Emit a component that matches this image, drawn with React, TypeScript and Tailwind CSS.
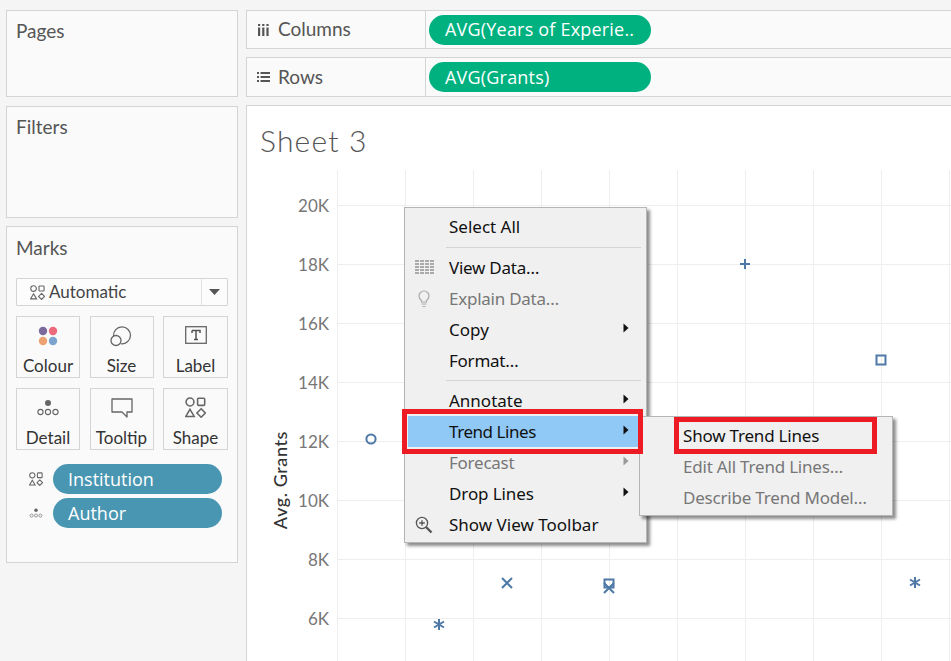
import React from "react";

const ui = { fontFamily: '"Lato","Open Sans",sans-serif' };
const menuFont = { fontFamily: '"Noto Sans","Open Sans",sans-serif' };
const pillFont = { fontFamily: '"Open Sans",Roboto,sans-serif' };

function Shapes({ size = 16, color = "#666" }: { size?: number; color?: string }) {
  return (
    <svg width={size} height={size} viewBox="0 0 16 16" fill="none" stroke={color} strokeWidth="1.2">
      <circle cx="3.8" cy="3.8" r="3" />
      <rect x="9.6" y="1" width="5.4" height="5.4" rx="0.8" />
      <path d="M3.8 9.4 L7 14.8 H0.6 Z" />
      <path d="M12.3 9 L15.5 12.2 L12.3 15.4 L9.1 12.2 Z" />
    </svg>
  );
}

function Dots({ size = 24, color = "#666" }: { size?: number; color?: string }) {
  return (
    <svg width={size} height={size * 0.75} viewBox="0 0 24 18" fill="none" stroke={color} strokeWidth="1.1">
      <circle cx="12" cy="4" r="3" fill={color} stroke="none" />
      <circle cx="4.5" cy="13" r="2.6" />
      <circle cx="12" cy="13" r="2.6" />
      <circle cx="19.5" cy="13" r="2.6" />
    </svg>
  );
}

function MarkCard({ label, w, icon }: { label: string; w: string; icon: React.ReactNode }) {
  return (
    <div className={`${w} h-[62px] border border-[#d4d4d4] bg-[#fafafa] flex flex-col items-center`}>
      <div className="h-[33px] flex items-center justify-center mt-[2px]">{icon}</div>
      <div className="text-[17px] leading-[22px] text-[#333] mt-[3px]">{label}</div>
    </div>
  );
}

function Shelf({ icon, label, pill, mt, h }: { icon: React.ReactNode; label: string; pill: string; mt: string; h: string }) {
  return (
    <div className={`${mt} ${h} border border-[#d4d4d4] border-r-0 bg-[#fafafa] flex items-center`}>
      <div className="w-[179px] h-full border-r border-[#d4d4d4] flex items-center shrink-0">
        <div className="w-[31px] flex justify-center pl-[1px]">{icon}</div>
        <span className="text-[19px] text-[#555]">{label}</span>
      </div>
      <div className="ml-[3px] w-[222px] h-[30px] rounded-full bg-[#00b180] text-white text-[18px] font-medium tracking-[0.2px] pl-[16px] flex items-center" style={pillFont}>
        {pill}
      </div>
    </div>
  );
}

function MenuRow({ label, disabled, arrow, icon, active, track = "tracking-[-0.25px]" }: { label: string; disabled?: boolean; arrow?: boolean; icon?: React.ReactNode; active?: boolean; track?: string }) {
  return (
    <div className={`relative h-[31px] flex items-center ${active ? "bg-[#90c8f6] mx-[3px]" : ""} ${disabled ? "text-[#777]" : "text-[#111]"}`}>
      <div className={`${active ? "w-[35px]" : "w-[38px]"} mr-[6px] flex justify-center shrink-0`}>{icon}</div>
      <span className={`text-[17px] leading-[31px] ${track}`}>{label}</span>
      {arrow && (
        <svg width="6" height="10" viewBox="0 0 6 10" className={`absolute ${active ? "left-[215px]" : "left-[218px]"} top-[9px]`}>
          <path d="M0.5 0.5 L5.5 5 L0.5 9.5 Z" fill={disabled ? "#999" : "#111"} />
        </svg>
      )}
    </div>
  );
}

function Sep({ h }: { h: string }) {
  return (
    <div className={`${h} flex items-center pl-[41px] pr-[5px]`}>
      <div className="h-px w-full bg-[#d4d4d4]" />
    </div>
  );
}

const C = "#4e79a7";

export default function App() {
  const vx = [337, 405, 473, 541, 609, 677, 745, 813, 881, 949];
  const hy = [205, 264, 323, 382, 441, 500, 559, 618];
  const labels = ["20K", "18K", "16K", "14K", "12K", "10K", "8K", "6K"];
  return (
    <div className="relative w-[951px] h-[661px] overflow-hidden bg-[#f5f5f5] flex" style={ui}>
      {/* left column */}
      <div className="w-[232px] ml-[6px] shrink-0 flex flex-col">
        <div className="mt-[10px] h-[87px] border border-[#d4d4d4] bg-[#fafafa] pl-[9px] pt-[8px] text-[19px] leading-[24px] text-[#555]">Pages</div>
        <div className="mt-[9px] h-[112px] border border-[#d4d4d4] bg-[#fafafa] pl-[9px] pt-[8px] text-[19px] leading-[24px] text-[#555]">Filters</div>
        <div className="mt-[8px] h-[337px] border border-[#d4d4d4] bg-[#fafafa] pl-[9px] pr-[9px] flex flex-col">
          <div className="mt-[9px] text-[19px] leading-[24px] text-[#555]">Marks</div>
          <div className="mt-[18px] h-[28px] border border-[#d4d4d4] bg-white/40 flex items-center rounded-[1px]">
            <div className="ml-[13px]"><Shapes size={15} /></div>
            <span className="ml-[4px] text-[17px] text-[#444] flex-1">Automatic</span>
            <div className="w-[26px] h-full border-l border-[#e2e2e2] flex items-center justify-center">
              <svg width="11" height="6" viewBox="0 0 11 6"><path d="M0 0 H11 L5.5 6 Z" fill="#555" /></svg>
            </div>
          </div>
          <div className="mt-[10px] flex justify-between">
            <MarkCard
              w="w-[64px]"
              label="Colour"
              icon={
                <svg width="20" height="20" viewBox="0 0 20 20">
                  <circle cx="5" cy="5" r="4.2" fill="#7c6a9c" />
                  <circle cx="15" cy="5" r="4.2" fill="#ed6a7c" />
                  <circle cx="5" cy="15" r="4.2" fill="#eea171" />
                  <circle cx="15" cy="15" r="4.2" fill="#7da4cf" />
                </svg>
              }
            />
            <MarkCard
              w="w-[64px]"
              label="Size"
              icon={
                <svg width="23" height="22" viewBox="0 0 23 22" fill="none" stroke="#666" strokeWidth="1.3">
                  <circle cx="6" cy="15.5" r="5" />
                  <path d="M3.5 11 A8.5 8.5 0 1 1 11 18.8" />
                </svg>
              }
            />
            <MarkCard
              w="w-[65px]"
              label="Label"
              icon={
                <svg width="22" height="19" viewBox="0 0 22 19" fill="none">
                  <rect x="0.7" y="0.7" width="20.6" height="16.6" stroke="#666" strokeWidth="1.3" />
                  <path d="M7 4.5 H15 V7 M7 7 V4.5 M11 4.5 V13.5 M9 13.5 H13" stroke="#555" strokeWidth="1.5" />
                </svg>
              }
            />
          </div>
          <div className="mt-[10px] flex justify-between">
            <MarkCard w="w-[64px]" label="Detail" icon={<Dots size={24} />} />
            <MarkCard
              w="w-[64px]"
              label="Tooltip"
              icon={
                <svg width="22" height="20" viewBox="0 0 22 20" fill="none" stroke="#666" strokeWidth="1.3">
                  <path d="M1 1 H21 V14 H16 V19 L11 14 H1 Z" strokeLinejoin="round" />
                </svg>
              }
            />
            <MarkCard w="w-[65px]" label="Shape" icon={<Shapes size={21} />} />
          </div>
          <div className="mt-[14px] flex items-center ml-[13px]">
            <Shapes size={14} />
            <div className="ml-[10px] w-[169px] h-[30px] rounded-full bg-[#4996b2] text-white text-[18px] font-medium pl-[15px] flex items-center" style={pillFont}>Institution</div>
          </div>
          <div className="mt-[4px] flex items-center ml-[13px]">
            <Dots size={14} />
            <div className="ml-[10px] w-[169px] h-[30px] rounded-full bg-[#4996b2] text-white text-[18px] font-medium pl-[15px] flex items-center" style={pillFont}>Author</div>
          </div>
        </div>
      </div>

      {/* right column */}
      <div className="ml-[8px] flex-1 flex flex-col min-w-0">
        <Shelf
          mt="mt-[10px]"
          h="h-[39px]"
          label="Columns"
          pill="AVG(Years of Experie.."
          icon={
            <svg width="11" height="12" viewBox="0 0 11 12" fill="#555">
              <rect x="0" y="0" width="2.2" height="2" /><rect x="0" y="3.5" width="2.2" height="8.5" />
              <rect x="4.2" y="0" width="2.2" height="2" /><rect x="4.2" y="3.5" width="2.2" height="8.5" />
              <rect x="8.4" y="0" width="2.2" height="2" /><rect x="8.4" y="3.5" width="2.2" height="8.5" />
            </svg>
          }
        />
        <Shelf
          mt="mt-[8px]"
          h="h-[40px]"
          label="Rows"
          pill="AVG(Grants)"
          icon={
            <svg width="13" height="10" viewBox="0 0 13 10" fill="#555">
              <rect x="0" y="0" width="2" height="2" /><rect x="3.5" y="0" width="9.5" height="2" />
              <rect x="0" y="4" width="2" height="2" /><rect x="3.5" y="4" width="9.5" height="2" />
              <rect x="0" y="8" width="2" height="2" /><rect x="3.5" y="8" width="9.5" height="2" />
            </svg>
          }
        />
        <div className="mt-[8px] flex-1 border-l border-t border-[#d4d4d4] bg-white flex flex-col min-h-0">
          <div className="h-[64px] pl-[13px] pt-[14px] text-[30px] leading-[40px] font-light text-[#555] tracking-[1.2px]">Sheet 3</div>
          <div className="flex flex-1 min-h-0">
            <div className="w-[24px] shrink-0" />
            <div className="w-[18px] shrink-0 pt-[261px]">
              <div className="[writing-mode:vertical-rl] rotate-180 text-[18px] leading-[18px] font-medium text-[#333] tracking-[0.6px] whitespace-nowrap">Avg. Grants</div>
            </div>
            <div className="w-[40px] shrink-0 flex flex-col items-end pt-[6px] text-[17px] text-[#777]">
              {labels.map((l) => (
                <div key={l} className="h-[59px] leading-[59px]">{l}</div>
              ))}
            </div>
            <svg className="ml-[8px] flex-1 min-w-0" width="614" height="491" viewBox="337 170 614 491" fill="none">
              {vx.map((x) => (
                <line key={x} x1={x + 0.5} x2={x + 0.5} y1={170} y2={661} stroke="#eeeeee" />
              ))}
              {hy.map((y) => (
                <line key={y} x1={331} x2={951} y1={y + 0.5} y2={y + 0.5} stroke="#eeeeee" />
              ))}
              <g stroke={C} strokeWidth="2">
                <circle cx="371" cy="439" r="4.6" />
                <path d="M740 264 H750 M745 259 V269" />
                <rect x="876.5" y="355.5" width="9" height="9" />
                <path d="M502 578 L512 588 M512 578 L502 588" />
                <rect x="604.5" y="579.5" width="9" height="8" />
                <path d="M604 583 L614 593 M614 583 L604 593" />
                <path d="M439 619 V630 M434 621.5 L444 627.5 M444 621.5 L434 627.5" />
                <path d="M915 577 V588 M910 579.5 L920 585.5 M920 579.5 L910 585.5" />
              </g>
            </svg>
          </div>
        </div>
      </div>

      {/* context menu */}
      <div
        className="absolute left-[404px] top-[207px] w-[243px] h-[336px] border border-[#b5b5b5] bg-[#f0f0f0] pt-[3px] shadow-[3px_3px_3px_rgba(0,0,0,0.45)]"
        style={menuFont}
      >
        <MenuRow label="Select All" track="tracking-normal" />
        <Sep h="h-[10px]" />
        <MenuRow
          label="View Data…"
          icon={
            <svg width="19" height="15" viewBox="0 0 19 15" fill="#aaa">
              {[0, 3, 6, 9, 12].map((y) => (
                <g key={y}>
                  <rect x="0" y={y} width="4" height="2" />
                  <rect x="5" y={y} width="4" height="2" />
                  <rect x="10" y={y} width="4" height="2" />
                  <rect x="15" y={y} width="4" height="2" />
                </g>
              ))}
            </svg>
          }
        />
        <MenuRow
          label="Explain Data…"
          disabled
          icon={
            <svg width="12" height="18" viewBox="0 0 12 18" fill="none" stroke="#aaa" strokeWidth="1.2">
              <path d="M3.5 10.5 C1.5 9 1 7.5 1 6 A5 5 0 0 1 11 6 C11 7.5 10.5 9 8.5 10.5 V12 H3.5 Z" />
              <path d="M3.5 14 H8.5 M4.5 16.5 H7.5" />
            </svg>
          }
        />
        <MenuRow label="Copy" arrow track="tracking-normal" />
        <MenuRow label="Format…" />
        <Sep h="h-[9px]" />
        <MenuRow label="Annotate" arrow track="tracking-normal" />
        <MenuRow label="Trend Lines" arrow active track="tracking-[-0.45px]" />
        <MenuRow label="Forecast" arrow disabled />
        <MenuRow label="Drop Lines" arrow track="tracking-[-0.1px]" />
        <MenuRow
          label="Show View Toolbar"
          track="tracking-normal"
          icon={
            <svg width="18" height="18" viewBox="0 0 18 18" fill="none" stroke="#555" strokeWidth="1.3">
              <circle cx="7" cy="7" r="5.6" />
              <path d="M4.2 7 H9.8 M7 4.2 V9.8" />
              <path d="M11 11 L16.5 16.5" strokeWidth="2.4" />
            </svg>
          }
        />
      </div>

      {/* submenu */}
      <div
        className="absolute left-[639px] top-[416px] w-[254px] h-[100px] border border-[#b5b5b5] bg-[#f0f0f0] pt-[3px] pl-[43px] shadow-[3px_3px_3px_rgba(0,0,0,0.45)] text-[17px] tracking-[-0.2px]"
        style={menuFont}
      >
        <div className="h-[31px] leading-[31px] text-[#111]">Show Trend Lines</div>
        <div className="h-[31px] leading-[31px] text-[#777]">Edit All Trend Lines…</div>
        <div className="h-[31px] leading-[31px] text-[#777]">Describe Trend Model…</div>
      </div>

      {/* annotation boxes */}
      <div className="absolute left-[402px] top-[409px] w-[241px] h-[45px] border-[5px] border-[#ed1c24]" />
      <div className="absolute left-[674px] top-[417px] w-[203px] h-[37px] border-[5px] border-[#ed1c24]" />
    </div>
  );
}
